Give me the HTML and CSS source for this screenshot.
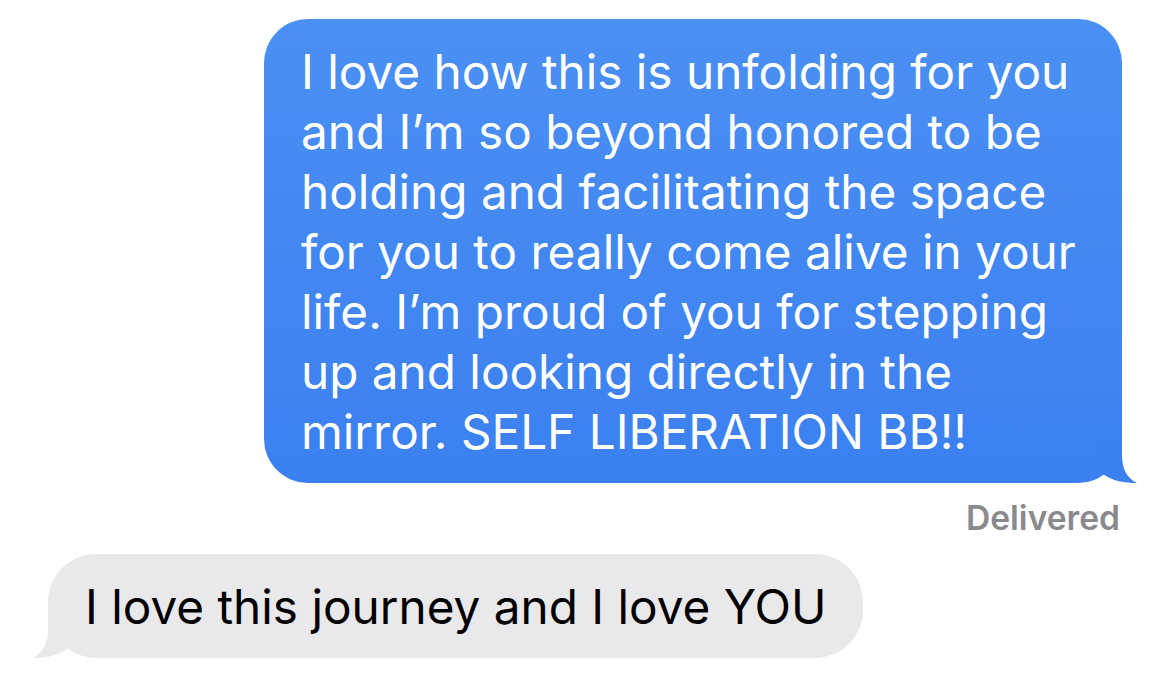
FILE: index.html
```html
<!DOCTYPE html>
<html lang="en">
<head>
<meta charset="utf-8">
<title>Messages</title>
<link rel="stylesheet" href="styles.css">
</head>
<body>
<div class="thread">
  <div class="row row-me">
    <div class="bubble bubble-me">
      <p class="msg">I love how this is unfolding for you<br>and I’m so beyond honored to be<br>holding and facilitating the space<br>for you to really come alive in your<br>life. I’m proud of you for stepping<br>up and looking directly in the<br>mirror. SELF LIBERATION BB!!</p>
      <svg class="tail tail-me" viewBox="0 0 60 50" width="60" height="50" aria-hidden="true">
        <path d="M40 6 L40 22 C40 37 46 46 55 50 C43 50 30 48 21 41 L18 6 Z" fill="#3b80f0"/>
      </svg>
    </div>
  </div>
  <div class="status">Delivered</div>
  <div class="row row-them">
    <div class="bubble bubble-them">
      <p class="msg">I love this journey and I love YOU</p>
      <svg class="tail tail-them" viewBox="0 0 60 50" width="60" height="50" aria-hidden="true">
        <path d="M20 6 L20 22 C20 37 14 45 5 50 C17 50 30 48 39 41 L42 6 Z" fill="#e9e9eb"/>
      </svg>
    </div>
  </div>
</div>
</body>
</html>
```
FILE: styles.css
```css
html, body {
  margin: 0;
  padding: 0;
  background: #ffffff;
}

body {
  width: 1170px;
  height: 677px;
  overflow: hidden;
  font-family: "Inter", "Noto Sans", "Liberation Sans", sans-serif;
}

.thread {
  display: flex;
  flex-direction: column;
  padding: 19px 48px 0 48px;
}

.row {
  display: flex;
}

.row-me {
  justify-content: flex-end;
}

.row-them {
  justify-content: flex-start;
  margin-top: 18px;
}

.bubble {
  position: relative;
  box-sizing: border-box;
  border-radius: 44px;
}

.bubble-me {
  width: 858px;
  height: 464px;
  padding: 23px 36px 20px 37px;
  background: linear-gradient(to bottom, #4a90f3 0%, #3b80f0 100%);
  color: #ffffff;
}

.bubble-them {
  height: 104px;
  padding: 23px 36px 20px 37px;
  background: #e9e9eb;
  color: #000000;
  border-radius: 48px;
}

.msg {
  margin: 0;
  font-size: 47.7px;
  line-height: 60px;
  white-space: nowrap;
  letter-spacing: 0;
}

.tail {
  position: absolute;
  bottom: 0;
  display: block;
}

.tail-me {
  right: -20px;
}

.tail-them {
  left: -20px;
}

.status {
  align-self: flex-end;
  margin-top: 17px;
  margin-right: 2px;
  font-size: 33.6px;
  line-height: 36px;
  font-weight: 600;
  color: #8a8a8e;
}
```
